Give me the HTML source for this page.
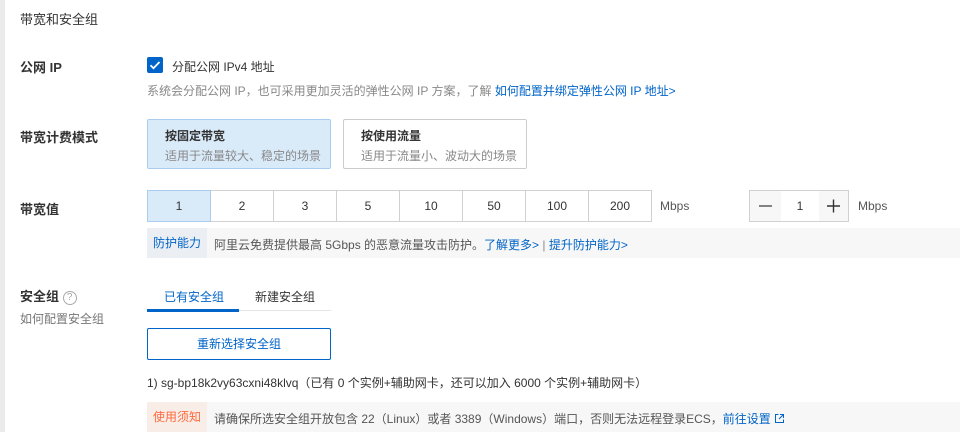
<!DOCTYPE html>
<html><head><meta charset="utf-8"><style>
*{margin:0;padding:0;box-sizing:border-box}
body{width:960px;height:432px;overflow:hidden;background:#fff;font-family:"Liberation Sans","Noto Sans CJK SC",sans-serif;font-size:12px;color:#333;position:relative}
.a{position:absolute;white-space:nowrap}
.lbl{font-size:13px;font-weight:bold;color:#333}
.blue{color:#0064c8}
.cell{position:absolute;top:190px;height:32px;border:1px solid #d1d1d1;text-align:center;line-height:30px;font-size:12px;color:#333;background:#fff}
</style></head><body>
<div class="a" style="left:0;top:0;width:5px;height:432px;background:#ebebeb"></div>
<div class="a" style="left:20px;top:9px;font-size:13px;color:#333">带宽和安全组</div>

<div class="a lbl" style="left:20px;top:57px">公网 IP</div>
<div class="a" style="left:147px;top:57px;width:16px;height:16px;background:#0064c8;border-radius:2px">
<svg width="16" height="16" viewBox="0 0 16 16"><path d="M3.5 8.2l3 3 6-6.2" stroke="#fff" stroke-width="1.8" fill="none"/></svg></div>
<div class="a" style="left:172px;top:58px;color:#333">分配公网 IPv4 地址</div>
<div class="a" style="left:147px;top:82px;color:#888">系统会分配公网 IP，也可采用更加灵活的弹性公网 IP 方案，了解 <span class="blue">如何配置并绑定弹性公网 IP 地址&gt;</span></div>

<div class="a lbl" style="left:20px;top:127px">带宽计费模式</div>
<div class="a" style="left:147px;top:119px;width:184px;height:50px;background:#d9eaf9;border:1px solid #a9cdf0;border-radius:2px;padding:7px 0 0 17px">
<div style="font-weight:bold;font-size:12px;color:#333">按固定带宽</div><div style="color:#888;margin-top:3px">适用于流量较大、稳定的场景</div></div>
<div class="a" style="left:343px;top:119px;width:184px;height:50px;background:#fff;border:1px solid #ccc;border-radius:2px;padding:7px 0 0 17px">
<div style="font-weight:bold;font-size:12px;color:#333">按使用流量</div><div style="color:#888;margin-top:3px">适用于流量小、波动大的场景</div></div>

<div class="a lbl" style="left:20px;top:199px">带宽值</div>
<div class="cell" style="left:147px;width:64px;background:#d9eaf9;border-color:#a9cdf0;z-index:2">1</div>
<div class="cell" style="left:210px;width:64px">2</div>
<div class="cell" style="left:273px;width:64px">3</div>
<div class="cell" style="left:336px;width:64px">5</div>
<div class="cell" style="left:399px;width:64px">10</div>
<div class="cell" style="left:462px;width:64px">50</div>
<div class="cell" style="left:525px;width:64px">100</div>
<div class="cell" style="left:588px;width:64px">200</div>
<div class="a" style="left:660px;top:199px;color:#555">Mbps</div>
<div class="a" style="left:749px;top:190px;width:100px;height:32px;border:1px solid #d1d1d1">
<div class="a" style="left:0;top:0;width:31px;height:30px;background:#f7f7f7"><svg width="31" height="30"><path d="M9 15h13" stroke="#333" stroke-width="1.2"/></svg></div>
<div class="a" style="left:31px;top:0;width:38px;height:30px;text-align:center;line-height:30px">1</div>
<div class="a" style="left:69px;top:0;width:29px;height:30px;background:#f7f7f7"><svg width="29" height="30"><path d="M8 15h13M14.5 8.5v13" stroke="#333" stroke-width="1.4"/></svg></div>
</div>
<div class="a" style="left:858px;top:199px;color:#555">Mbps</div>

<div class="a" style="left:147px;top:228px;width:813px;height:30px;background:#f7f7f7"></div>
<div class="a" style="left:147px;top:228px;width:60px;height:30px;background:#ebeff3;color:#0064c8;text-align:center;line-height:30px">防护能力</div>
<div class="a" style="left:214px;top:236px;color:#555">阿里云免费提供最高 5Gbps 的恶意流量攻击防护。<span class="blue">了解更多&gt;</span> <span style="color:#888">|</span> <span class="blue">提升防护能力&gt;</span></div>

<div class="a lbl" style="left:20px;top:286px">安全组 <span style="display:inline-block;width:14px;height:14px;border:1px solid #aaa;border-radius:50%;font-size:10px;color:#aaa;text-align:center;line-height:12px;font-weight:normal;vertical-align:1px">?</span></div>
<div class="a" style="left:20px;top:310px;color:#777">如何配置安全组</div>
<div class="a" style="left:164px;top:288px;color:#0064c8;font-size:12px">已有安全组</div>
<div class="a" style="left:255px;top:288px;color:#333;font-size:12px">新建安全组</div>
<div class="a" style="left:147px;top:310px;width:184px;height:1px;background:#e5e5e5"></div>
<div class="a" style="left:147px;top:309px;width:92px;height:3px;background:#0064c8"></div>
<div class="a" style="left:147px;top:328px;width:184px;height:32px;border:1px solid #0064c8;border-radius:2px;text-align:center;line-height:30px;color:#0064c8">重新选择安全组</div>
<div class="a" style="left:147px;top:374px;color:#333">1) sg-bp18k2vy63cxni48klvq（已有 0 个实例+辅助网卡，还可以加入 6000 个实例+辅助网卡）</div>

<div class="a" style="left:147px;top:402px;width:813px;height:30px;background:#f7f7f7"></div>
<div class="a" style="left:147px;top:402px;width:60px;height:30px;background:#f9ede7;color:#ff6a3d;text-align:center;line-height:30px">使用须知</div>
<div class="a" style="left:214px;top:410px;color:#555">请确保所选安全组开放包含 22（Linux）或者 3389（Windows）端口，否则无法远程登录ECS，<span class="blue">前往设置</span> <svg width="11" height="11" viewBox="0 0 11 11" style="vertical-align:-1px"><path d="M4.5 1.5H1.5v8h8V6.5M6 1.5h3.5V5M9.5 1.5L5 6" stroke="#0064c8" fill="none"/></svg></div>
</body></html>
